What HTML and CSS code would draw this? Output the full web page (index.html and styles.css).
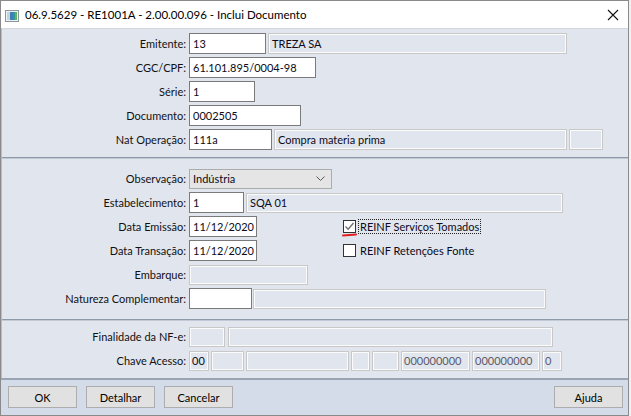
FILE: index.html
```html
<!DOCTYPE html>
<html lang="pt">
<head>
<meta charset="utf-8">
<title>Inclui Documento</title>
<link rel="stylesheet" href="styles.css">
</head>
<body>
<div class="window">
  <div class="titlebar">
    <svg class="appicon" width="14" height="12" viewBox="0 0 14 12">
      <rect x="0.5" y="0.5" width="13" height="11" fill="#eef1f4" stroke="#8c96a0"/>
      <rect x="2" y="2" width="3" height="8" fill="#c9d3dc"/>
      <rect x="5" y="2" width="3" height="8" fill="#3d7fb8"/>
      <rect x="8" y="2" width="2" height="8" fill="#2f9a8a"/>
      <rect x="10" y="2" width="2" height="8" fill="#63b360"/>
    </svg>
    <span class="title">06.9.5629 - RE1001A - 2.00.00.096 - Inclui Documento</span>
    <svg class="close" width="12" height="12" viewBox="0 0 12 12">
      <path d="M1 1 L11 11 M11 1 L1 11" stroke="#111" stroke-width="1.1" fill="none"/>
    </svg>
  </div>

  <div class="content">
    <div class="sec sec1">
      <div class="row"><span class="lbl">Emitente:</span><span class="in w77">13</span><span class="ro w299 gap2">TREZA SA</span></div>
      <div class="row"><span class="lbl">CGC/CPF:</span><span class="in w127">61.101.895/0004-98</span></div>
      <div class="row"><span class="lbl">Série:</span><span class="in w66">1</span></div>
      <div class="row"><span class="lbl">Documento:</span><span class="in w112">0002505</span></div>
      <div class="row"><span class="lbl">Nat Operação:</span><span class="in w83">111a</span><span class="ro w293 gap2">Compra materia prima</span><span class="ro w34 gap2"></span></div>
    </div>
    <div class="sep"></div>
    <div class="sec sec2">
      <div class="row"><span class="lbl">Observação:</span>
        <span class="select w143"><span class="seltext">Indústria</span>
          <svg class="chev" width="9" height="5" viewBox="0 0 9 5"><path d="M0.5 0.5 L4.5 4.5 L8.5 0.5" stroke="#555" fill="none"/></svg>
        </span>
      </div>
      <div class="row"><span class="lbl">Estabelecimento:</span><span class="in w55">1</span><span class="ro w317 gap2">SQA 01</span></div>
      <div class="row"><span class="lbl">Data Emissão:</span><span class="in w68">11/12/2020</span>
        <span class="check checked">
          <span class="box"><svg width="11" height="11" viewBox="0 0 11 11"><path d="M1.5 5.5 L4.2 8.2 L9.5 2" stroke="#6d6d6d" stroke-width="1.3" fill="none"/></svg></span>
          <span class="cklabel focus">REINF Serviços Tomados</span>
          <span class="redmark"></span>
        </span>
      </div>
      <div class="row"><span class="lbl">Data Transação:</span><span class="in w68">11/12/2020</span>
        <span class="check">
          <span class="box"></span>
          <span class="cklabel">REINF Retenções Fonte</span>
        </span>
      </div>
      <div class="row"><span class="lbl">Embarque:</span><span class="ro w119"></span></div>
      <div class="row"><span class="lbl">Natureza Complementar:</span><span class="in w63">&nbsp;</span><span class="ro w293 gap1">&nbsp;</span></div>
    </div>
    <div class="sep"></div>
    <div class="sec sec3">
      <div class="row"><span class="lbl">Finalidade da NF-e:</span><span class="ro w36"></span><span class="ro w325 gap3"></span></div>
      <div class="row"><span class="lbl">Chave Acesso:</span>
        <span class="ro w20 dark">00</span>
        <span class="ro w33 gap2"></span>
        <span class="ro w103 gap2"></span>
        <span class="ro w19 gap2"></span>
        <span class="ro w27 gap2"></span>
        <span class="ro w69 gap2 grey">000000000</span>
        <span class="ro w68 gap2 grey">000000000</span>
        <span class="ro w20 gap2 grey">0</span>
      </div>
    </div>
  </div>

  <div class="buttons">
    <button class="btn">OK</button>
    <button class="btn">Detalhar</button>
    <button class="btn">Cancelar</button>
    <span class="spacer"></span>
    <button class="btn">Ajuda</button>
  </div>
</div>
</body>
</html>
```

FILE: styles.css
```css
* { box-sizing: border-box; }
html, body { margin: 0; padding: 0; }
body {
  background: #f0f0f0;
  font-family: "Lato", "Liberation Sans", sans-serif;
  font-size: 11px;
  color: #000;
  width: 631px;
  height: 416px;
  overflow: hidden;
}
.window {
  width: 629px;
  height: 416px;
  border: 1px solid #8a8a8a;
  background: #e1e5ee;
  display: flex;
  flex-direction: column;
}
.titlebar {
  height: 27px;
  flex: none;
  background: #fff;
  display: flex;
  align-items: center;
  padding-left: 4px;
  padding-right: 9px;
}
.appicon { flex: none; margin-top: 2px; }
.title {
  margin-left: 6px;
  font-size: 11.5px;
  color: #000;
  flex: 1;
}
.close { flex: none; }
.content {
  flex: none;
  border-top: 1px solid #d3d7de;
  border-left: 1px solid #b9bec6;
}
.sec { display: flex; flex-direction: column; gap: 3px; }
.sec1 { padding: 4px 0 7px; }
.sec2 { padding: 9px 0 10px; }
.sec3 { padding: 5px 0 7px; }
.sep {
  height: 2px;
  border-top: 1px solid #8d98a9;
  border-bottom: 1px solid #c3cad6;
}
.row {
  display: flex;
  align-items: center;
  height: 21px;
  position: relative;
}
.lbl {
  width: 187px;
  flex: none;
  text-align: right;
  padding-right: 3px;
  color: #111;
}
.in, .ro {
  flex: none;
  height: 21px;
  line-height: 19px;
  padding: 0 3px;
  white-space: nowrap;
  overflow: hidden;
  color: #0b0b20;
}
.in {
  background: #fff;
  border: 1px solid #7a7a7a;
}
.ro {
  background: #e1e5ee;
  border: 1px solid #c8c8c8;
  box-shadow: inset 0 0 0 1px #fbfbfc;
  height: 20px;
  line-height: 18px;
}
.sec1 .ro { height: 21px; line-height: 19px; }
.ro.grey { color: #5a5a66; padding: 0 2px; }
.ro.dark { padding: 0 2px; color: #0b0b20; }
.gap1 { margin-left: 1px; }
.gap2 { margin-left: 2px; }
.gap3 { margin-left: 3px; }

.w19 { width: 19px; }
.w20 { width: 20px; }
.w27 { width: 27px; }
.w33 { width: 33px; }
.w34 { width: 34px; }
.w36 { width: 36px; }
.w55 { width: 55px; }
.w63 { width: 63px; }
.w66 { width: 66px; }
.w68 { width: 68px; }
.w69 { width: 69px; }
.w77 { width: 77px; }
.w83 { width: 83px; }
.w103 { width: 103px; }
.w112 { width: 112px; }
.w119 { width: 119px; }
.w127 { width: 127px; }
.w143 { width: 143px; }
.w293 { width: 293px; }
.w299 { width: 299px; }
.w317 { width: 317px; }
.w325 { width: 325px; }

.select {
  flex: none;
  height: 20px;
  display: flex;
  align-items: center;
  background: #e5e5e5;
  border: 1px solid #acacac;
  padding: 0 6px 0 3px;
}
.seltext { flex: 1; color: #0b0b20; }
.chev { flex: none; }

.check {
  display: flex;
  align-items: center;
  margin-left: 86px;
  position: relative;
}
.box {
  width: 13px;
  height: 13px;
  border: 1px solid #333;
  background: #fff;
  flex: none;
  display: flex;
  align-items: center;
  justify-content: center;
}
.cklabel {
  margin-left: 2px;
  padding: 0 1px;
  line-height: 13px;
  border: 1px dotted transparent;
  color: #0b0b20;
}
.cklabel.focus { border-color: #222; }
.redmark {
  position: absolute;
  left: -1px;
  top: 15px;
  width: 15px;
  height: 2px;
  background: #e0201c;
  border-radius: 1px;
  transform: rotate(-4deg);
}

.buttons {
  flex: 1;
  background: #d4dbe9;
  border-top: 2px solid #9aa4b2;
  display: flex;
  align-items: flex-start;
  padding: 6px 5px 0 7px;
  gap: 9px;
}
.spacer { flex: 1; }
.btn {
  width: 69px;
  height: 22px;
  background: #e1e1e1;
  border: 1px solid #adadad;
  font-family: "Lato", "Liberation Sans", sans-serif;
  font-size: 11px;
  color: #000;
  padding: 0;
  margin: 0;
}
```
